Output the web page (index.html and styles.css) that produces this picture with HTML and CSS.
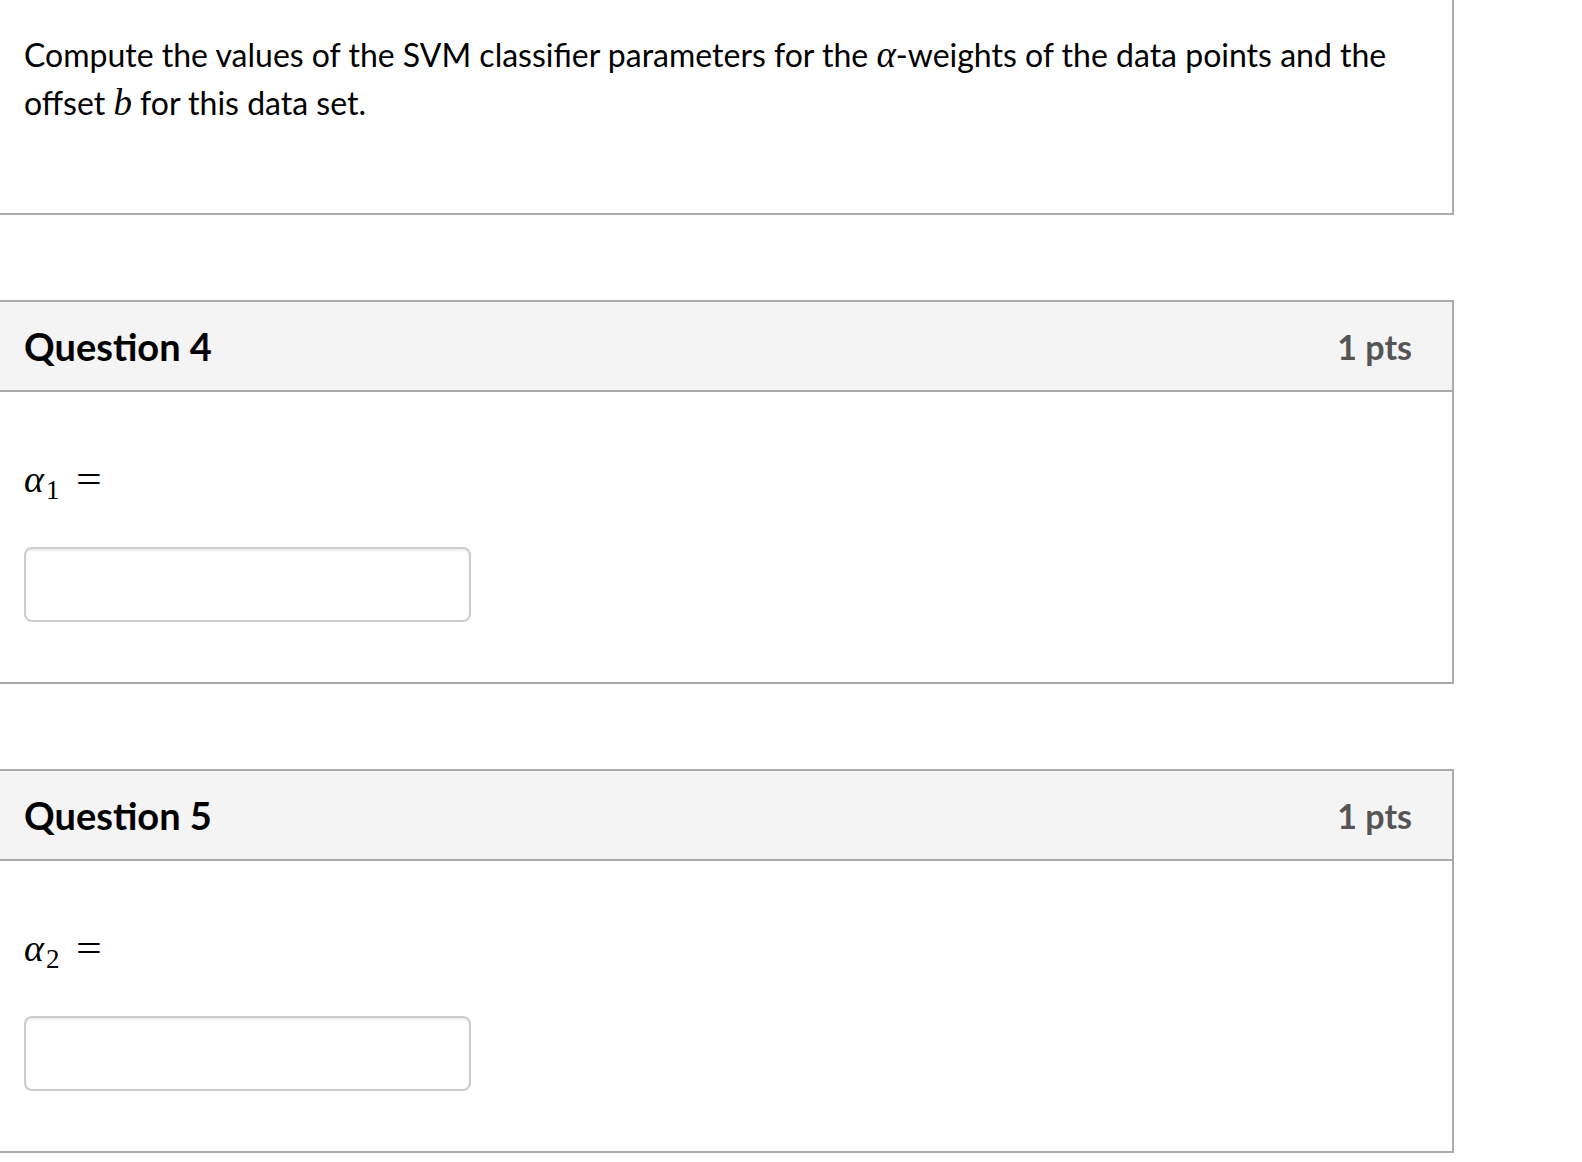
FILE: index.html
```html
<!DOCTYPE html>
<html>
<head>
<meta charset="utf-8">
<link rel="stylesheet" href="styles.css">
</head>
<body>
<div class="page">
  <section class="qbox intro">
    <div class="qtext">Compute the values of the SVM classifier parameters for the <span class="m">α</span>-weights of the data points and the offset <span class="m">b</span> for this data set.</div>
  </section>

  <section class="qbox">
    <header class="qhead">
      <span class="qname">Question 4</span>
      <span class="qpts">1 pts</span>
    </header>
    <div class="qbody">
      <div class="eq"><span class="mi">α</span><span class="sub">1</span><span class="eqsign">=</span></div>
      <input class="answer" type="text">
    </div>
  </section>

  <section class="qbox">
    <header class="qhead">
      <span class="qname">Question 5</span>
      <span class="qpts">1 pts</span>
    </header>
    <div class="qbody">
      <div class="eq"><span class="mi">α</span><span class="sub">2</span><span class="eqsign">=</span></div>
      <input class="answer" type="text">
    </div>
  </section>
</div>
</body>
</html>
```

FILE: styles.css
```css
html, body {
  margin: 0;
  padding: 0;
  background: #ffffff;
}
body {
  font-family: Lato, "Open Sans", sans-serif;
  color: #000000;
}
.page {
  width: 1454px;
  display: flex;
  flex-direction: column;
  gap: 85px;
}
.qbox {
  border: 2px solid #ababab;
  border-left: none;
  background: #ffffff;
}
.intro {
  border-top: none;
  padding: 31px 24px 86px 24px;
}
.qtext {
  font-size: 32px;
  line-height: 48px;
}
.m {
  font-family: "Liberation Serif", "DejaVu Serif", serif;
  font-style: italic;
  font-size: 37px;
  line-height: 1;
}
.qhead {
  display: flex;
  justify-content: space-between;
  align-items: center;
  height: 88px;
  padding: 0 40px 0 24px;
  background: #f4f4f4;
  border-bottom: 2px solid #ababab;
}
.qname {
  font-size: 38px;
  font-weight: 700;
  color: #000000;
}
.qpts {
  font-size: 34px;
  font-weight: 700;
  color: #555555;
}
.qbody {
  padding: 63px 24px 60px 24px;
  display: flex;
  flex-direction: column;
  align-items: flex-start;
  gap: 44px;
}
.eq {
  font-family: "Liberation Serif", "DejaVu Serif", serif;
  font-size: 38px;
  line-height: 48px;
  height: 48px;
  display: flex;
  align-items: baseline;
  color: #000000;
}
.mi {
  font-style: italic;
}
.sub {
  font-size: 27px;
  position: relative;
  top: 7px;
  margin-left: 2px;
}
.eqsign {
  display: inline-block;
  margin-left: 17px;
  transform: scaleX(1.2);
  transform-origin: left center;
}
.answer {
  width: 447px;
  height: 75px;
  box-sizing: border-box;
  border: 2px solid #cccccc;
  border-radius: 8px;
  box-shadow: inset 0 2px 2px rgba(0, 0, 0, 0.06);
  margin: 0;
  padding: 0 12px;
  font-size: 28px;
  background: #ffffff;
  outline: none;
}
```
